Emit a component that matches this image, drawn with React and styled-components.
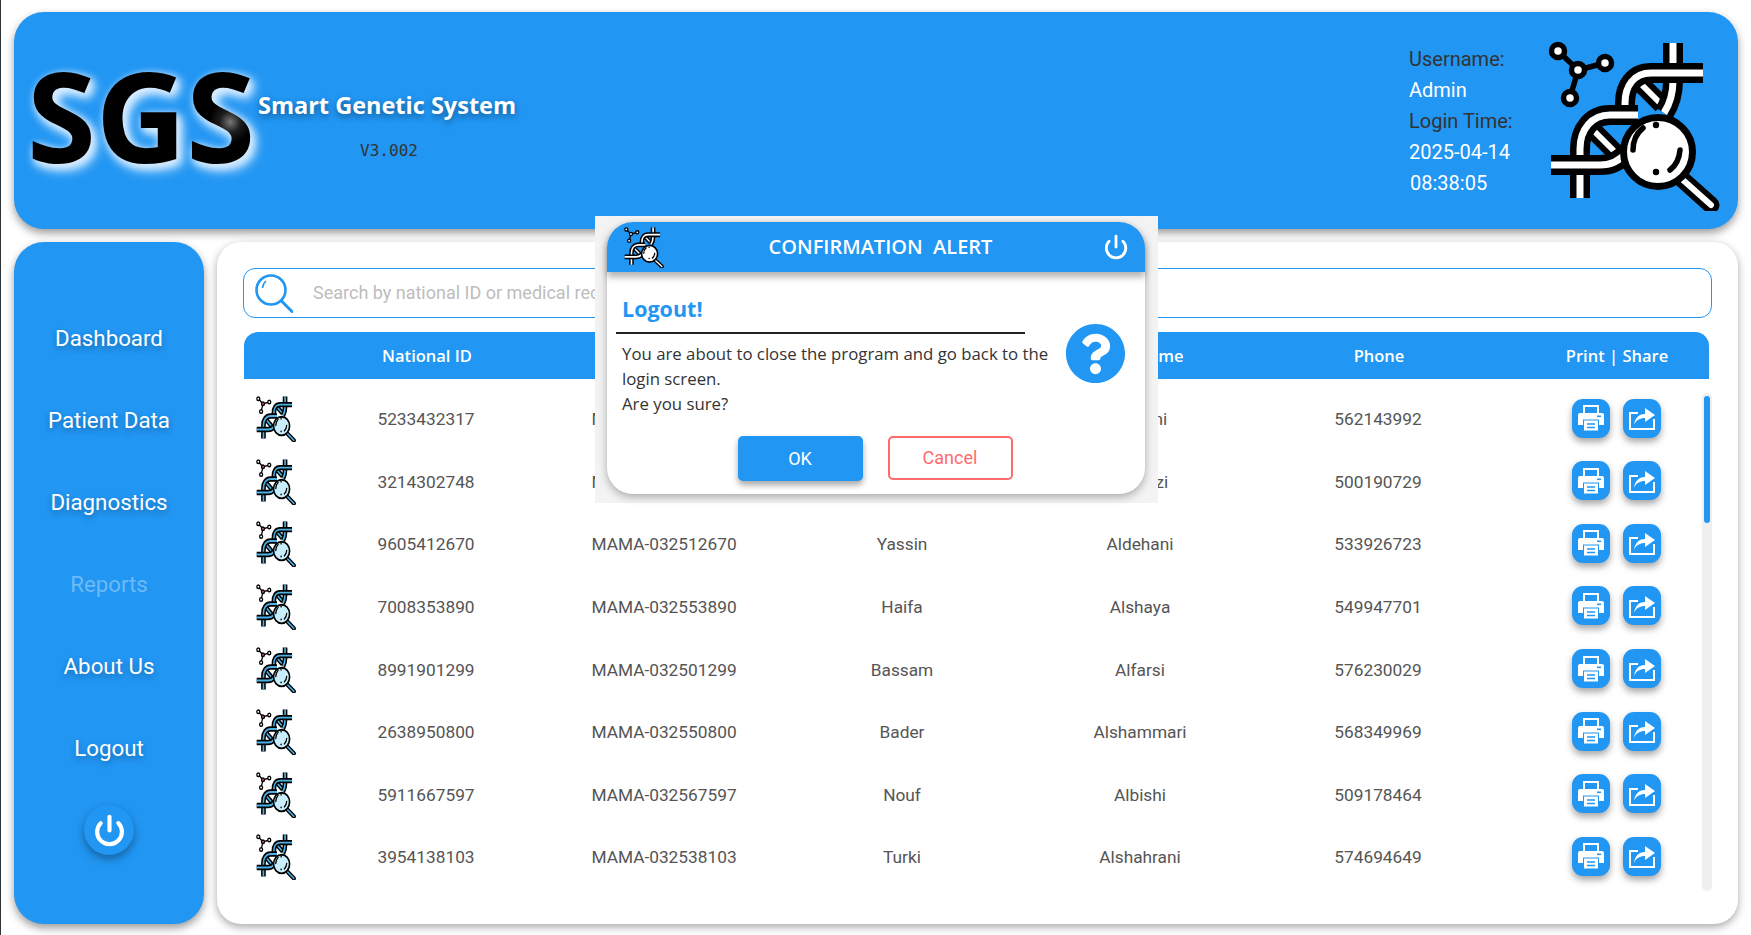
import React from 'react';
import styled, { createGlobalStyle, css } from 'styled-components';
import { Power } from 'lucide-react';
import { FaQuestionCircle } from 'react-icons/fa';

const BLUE = '#2196f3';

const patients = [
  ['5233432317', 'MAMA-032532317', 'Nasser', 'Alqarni', '562143992'],
  ['3214302748', 'MAMA-032502748', 'Noura', 'Alanazi', '500190729'],
  ['9605412670', 'MAMA-032512670', 'Yassin', 'Aldehani', '533926723'],
  ['7008353890', 'MAMA-032553890', 'Haifa', 'Alshaya', '549947701'],
  ['8991901299', 'MAMA-032501299', 'Bassam', 'Alfarsi', '576230029'],
  ['2638950800', 'MAMA-032550800', 'Bader', 'Alshammari', '568349969'],
  ['5911667597', 'MAMA-032567597', 'Nouf', 'Albishi', '509178464'],
  ['3954138103', 'MAMA-032538103', 'Turki', 'Alshahrani', '574694649'],
];

const navItems = ['Dashboard', 'Patient Data', 'Diagnostics', 'Reports', 'About Us', 'Logout'];

const tubes = [
  'M125,2 V40 Q125,58 116,72',
  'M155,32 H103 C86,32 77,45 77,62 V74',
  'M32,157 V108 C32,88 44,74 62,74 H90',
  'M3,124 H52 Q68,124 78,112',
];

const GeneIcon = ({ width, height, tube = '#fff', lens = '#fff', node = '#fff' }) => (
  <svg width={width} height={height} viewBox="0 0 172 170" preserveAspectRatio="none">
    <g fill="none" stroke="#000" strokeWidth="5.5">
      <path d="M30,29 L10,10 M30,29 L57,22 M30,29 L22,57" />
      <circle cx="10" cy="10" r="6.5" fill="#fff" />
      <circle cx="57" cy="22" r="6.5" fill="#fff" />
      <circle cx="22" cy="57" r="6.5" fill="#fff" />
      <circle cx="30" cy="29" r="6.5" fill={node} />
    </g>
    <g fill="none">
      <path d="M90,40 L114,64 M44,88 L68,112" stroke="#000" strokeWidth="18" />
      <path d="M90,40 L114,64 M44,88 L68,112" stroke={tube} strokeWidth="6" />
      {tubes.map((d) => (
        <g key={d}>
          <path d={d} stroke="#000" strokeWidth="20" />
          <path d={d} stroke={tube} strokeWidth="7" />
        </g>
      ))}
    </g>
    <path d="M135,139 L163,164" stroke="#000" strokeWidth="17" strokeLinecap="round" />
    <path d="M135,139 L163,164" stroke={tube} strokeWidth="6" strokeLinecap="round" />
    <circle cx="110" cy="111" r="34.5" fill={lens} stroke="#000" strokeWidth="7" />
    <g fill="none" stroke="#000" strokeWidth="5.5" strokeLinecap="round">
      <path d="M95,87 Q85,95 85,109" />
      <path d="M132,109 Q131,122 122,129" />
    </g>
    <circle cx="108" cy="84" r="3.2" fill="#000" />
    <circle cx="108" cy="131" r="3.2" fill="#000" />
  </svg>
);

const SearchIcon = () => (
  <svg width="38" height="40" viewBox="0 0 38 40" fill="none" stroke={BLUE} strokeWidth="2.6">
    <circle cx="16" cy="17" r="14.5" />
    <path d="M26.5,28 L37,38.5" strokeLinecap="round" strokeWidth="3" />
    <path d="M7.5,15 Q8,10.5 11,8" strokeWidth="1.6" />
  </svg>
);

const PrintIcon = () => (
  <svg width="30" height="30" viewBox="0 0 30 30">
    <rect x="8" y="3" width="14" height="8" fill="none" stroke="#fff" strokeWidth="2" />
    <path d="M4,10 H26 Q28,10 28,12 V22 H2 V12 Q2,10 4,10 Z" fill="#fff" />
    <rect x="21" y="12.5" width="4" height="1.6" fill={BLUE} />
    <rect x="7.5" y="17" width="15" height="11" fill="#fff" stroke={BLUE} strokeWidth="1" />
    <path d="M11,21 H19 M11,24.5 H19" stroke={BLUE} strokeWidth="1.6" />
  </svg>
);

const ShareIcon = () => (
  <svg width="30" height="30" viewBox="0 0 30 30">
    <path d="M11,10 H3 V26 H27 V16" fill="none" stroke="#fff" strokeWidth="2" />
    <path d="M7,22 C8,14 13,11 18,11 V5 L28,12 L18,19 V15 C13,15 9,17 7,22 Z" fill="#fff" />
  </svg>
);

const App = () => (
  <Page>
    <GlobalStyle />
    <Header>
      <Logo>SGS</Logo>
      <Brand>
        <BrandName>Smart Genetic System</BrandName>
        <Version>V3.002</Version>
      </Brand>
      <UserInfo>
        <UserLabel>Username:</UserLabel>
        <UserValue>Admin</UserValue>
        <UserLabel>Login Time:</UserLabel>
        <UserValue>2025-04-14</UserValue>
        <UserValue $nudge>08:38:05</UserValue>
      </UserInfo>
      <HeaderIcon>
        <GeneIcon width={172} height={170} />
      </HeaderIcon>
    </Header>
    <Main>
      <Sidebar>
        {navItems.map((item) => (
          <NavItem key={item} $disabled={item === 'Reports'}>
            {item}
          </NavItem>
        ))}
        <PowerButton>
          <Power size={33} strokeWidth={3} color="#fff" />
        </PowerButton>
      </Sidebar>
      <Content>
        <SearchBar>
          <SearchIcon />
          <SearchInput placeholder="Search by national ID or medical record number" />
        </SearchBar>
        <TableHead>
          <span />
          <HeadCell>National ID</HeadCell>
          <HeadCell>Medical Record</HeadCell>
          <HeadCell>First Name</HeadCell>
          <HeadCell>Last Name</HeadCell>
          <HeadCell>Phone</HeadCell>
          <HeadCell $last>Print | Share</HeadCell>
        </TableHead>
        <TableBody>
          <Rows>
            {patients.map((p) => (
              <Row key={p[0]}>
                <GeneIcon width={40} height={46} tube="#4db2e6" lens="#c8edfb" node="#e8605c" />
                {p.map((value) => (
                  <Cell key={value}>{value}</Cell>
                ))}
                <Actions>
                  <ActionButton>
                    <PrintIcon />
                  </ActionButton>
                  <ActionButton>
                    <ShareIcon />
                  </ActionButton>
                </Actions>
              </Row>
            ))}
          </Rows>
          <ScrollTrack>
            <ScrollThumb />
          </ScrollTrack>
        </TableBody>
      </Content>
    </Main>
    <ModalBackdrop>
      <Modal>
        <ModalHeader>
          <GeneIcon width={40} height={41} />
          <ModalTitle>CONFIRMATION&nbsp;&nbsp;ALERT</ModalTitle>
          <Power size={26} strokeWidth={2.6} color="#fff" />
        </ModalHeader>
        <ModalBody>
          <ModalMessage>
            <ModalHeading>Logout!</ModalHeading>
            <Divider />
            <MessageText>
              You are about to close the program and go back to the login screen.
              <br />
              Are you sure?
            </MessageText>
          </ModalMessage>
          <QuestionMark>
            <FaQuestionCircle size={61} color={BLUE} />
          </QuestionMark>
        </ModalBody>
        <ModalActions>
          <OkButton>OK</OkButton>
          <CancelButton>Cancel</CancelButton>
        </ModalActions>
      </Modal>
    </ModalBackdrop>
  </Page>
);

const GlobalStyle = createGlobalStyle`
  html, body {
    margin: 0;
    padding: 0;
    background: #fff;
    overflow: hidden;
  }
  * {
    box-sizing: border-box;
  }
`;

const Page = styled.div`
  position: relative;
  width: 1751px;
  height: 935px;
  padding: 12px 13px 0 13px;
  border-left: 1px solid #2f3336;
  font-family: Roboto, sans-serif;
  overflow: hidden;
`;

const Header = styled.header`
  height: 217px;
  display: flex;
  align-items: center;
  padding: 0 18px 0 13px;
  background: ${BLUE};
  border-radius: 30px;
  box-shadow: 0 4px 8px rgba(0, 0, 0, 0.4);
`;

const Logo = styled.div`
  width: 231px;
  margin-top: -12px;
  font-family: 'Open Sans', sans-serif;
  font-weight: 700;
  font-size: 125px;
  line-height: 1;
  color: transparent;
  background-image: radial-gradient(circle at 88% 56%, #777, #1c1c1c 5%, #000 10%);
  -webkit-background-clip: text;
  background-clip: text;
  filter: drop-shadow(3px 3px 4px #d8edff) drop-shadow(2px 3px 4px #cfe8ff);
`;

const Brand = styled.div`
  display: flex;
  flex-direction: column;
  align-items: center;
  width: 258px;
  margin-top: 7px;
`;

const BrandName = styled.div`
  font-family: 'Open Sans', sans-serif;
  font-weight: 700;
  font-size: 23.5px;
  line-height: 32px;
  color: #fff;
  white-space: nowrap;
  text-shadow: 0 3px 6px rgba(0, 0, 0, 0.4);
`;

const Version = styled.div`
  margin-top: 21px;
  margin-left: 4px;
  font-family: 'DejaVu Sans Mono', monospace;
  font-size: 16px;
  line-height: 18px;
  color: #333;
`;

const UserInfo = styled.div`
  margin-left: auto;
  margin-right: 34px;
  margin-top: 2px;
  width: 105px;
  display: flex;
  flex-direction: column;
  font-size: 20px;
  line-height: 31px;
  white-space: nowrap;
`;

const UserLabel = styled.div`
  color: #333;
`;

const UserValue = styled.div`
  color: #fff;
  ${(p) => p.$nudge && 'padding-left: 1px;'}
`;

const HeaderIcon = styled.div`
  margin-top: 11px;
  line-height: 0;
`;

const Main = styled.main`
  display: flex;
  gap: 13px;
  height: 682px;
  margin-top: 13px;
`;

const Sidebar = styled.nav`
  flex: 0 0 190px;
  display: flex;
  flex-direction: column;
  align-items: center;
  padding-top: 55px;
  background: ${BLUE};
  border-radius: 30px;
  box-shadow: 0 4px 8px rgba(0, 0, 0, 0.4);
`;

const NavItem = styled.div`
  height: 82px;
  display: flex;
  align-items: center;
  font-size: 22.3px;
  color: ${(p) => (p.$disabled ? 'rgba(255, 255, 255, 0.35)' : '#fff')};
  text-shadow: ${(p) => (p.$disabled ? 'none' : '0 3px 6px rgba(0, 0, 0, 0.3)')};
`;

const PowerButton = styled.div`
  width: 50px;
  height: 50px;
  margin-top: 16px;
  display: flex;
  align-items: center;
  justify-content: center;
  background: ${BLUE};
  border-radius: 50%;
  box-shadow: 0 4px 8px rgba(0, 0, 0, 0.35);
`;

const Content = styled.section`
  flex: 1;
  min-width: 0;
  display: flex;
  flex-direction: column;
  padding: 26px 26px 0;
  background: #fff;
  border-radius: 24px;
  box-shadow: 0 3px 8px rgba(0, 0, 0, 0.35);
`;

const SearchBar = styled.div`
  height: 50px;
  display: flex;
  align-items: center;
  gap: 18px;
  padding: 0 11px;
  border: 1.5px solid ${BLUE};
  border-radius: 12px;
`;

const SearchInput = styled.input`
  flex: 1;
  border: none;
  outline: none;
  background: transparent;
  font-family: Roboto, sans-serif;
  font-size: 18px;
  color: #555;
  margin-top: -1px;
  &::placeholder {
    color: #bdbdbd;
  }
`;

const columns = css`
  display: grid;
  grid-template-columns: 64px repeat(5, 238px) minmax(0, 1fr);
  align-items: center;
`;

const TableHead = styled.div`
  ${columns}
  height: 47px;
  margin: 14px 3px 0 1px;
  background: ${BLUE};
  border-radius: 14px 14px 0 0;
`;

const HeadCell = styled.div`
  text-align: center;
  font-family: 'Open Sans', sans-serif;
  font-size: 16.5px;
  font-weight: 600;
  color: #fff;
  white-space: nowrap;
  ${(p) => p.$last && 'width: 238px;'}
`;

const TableBody = styled.div`
  flex: 1;
  display: flex;
  margin-top: 9px;
  margin-left: 1px;
`;

const Rows = styled.div`
  width: 1458px;
  display: flex;
  flex-direction: column;
`;

const Row = styled.div`
  ${columns}
  height: 62.57px;
  padding-left: 12px;
  grid-template-columns: 51px repeat(5, 238px) minmax(0, 1fr);
`;

const Cell = styled.div`
  text-align: center;
  font-size: 17.3px;
  color: #555;
`;

const Actions = styled.div`
  width: 238px;
  margin-top: -2px;
  display: flex;
  justify-content: center;
  gap: 13px;
`;

const ActionButton = styled.div`
  width: 38px;
  height: 39px;
  display: flex;
  align-items: center;
  justify-content: center;
  background: ${BLUE};
  border-radius: 11px;
  box-shadow: 0 4px 7px rgba(0, 0, 0, 0.35);
`;

const ScrollTrack = styled.div`
  width: 10px;
  height: 498px;
  margin-top: 5px;
  padding: 3px 2px;
  background: #efefef;
  border-radius: 5px;
`;

const ScrollThumb = styled.div`
  height: 127px;
  background: ${BLUE};
  border-radius: 3px;
`;

const ModalBackdrop = styled.div`
  position: absolute;
  left: 594px;
  top: 216px;
  width: 563px;
  height: 287px;
  padding: 6px 13px 0 12px;
  background: #f3f3f3;
`;

const Modal = styled.div`
  height: 272px;
  background: #fff;
  border-radius: 26px;
  box-shadow: 0 3px 8px rgba(0, 0, 0, 0.3);
`;

const ModalHeader = styled.div`
  height: 50px;
  display: flex;
  align-items: center;
  padding: 0 16px 0 17px;
  background: ${BLUE};
  border-radius: 26px 26px 0 0;
  box-shadow: 0 5px 7px rgba(0, 0, 0, 0.3);
`;

const ModalTitle = styled.div`
  flex: 1;
  text-align: center;
  margin-right: 6px;
  margin-top: -1px;
  font-family: 'Open Sans', sans-serif;
  font-weight: 600;
  font-size: 20px;
  color: #fff;
`;

const ModalBody = styled.div`
  display: flex;
  padding: 14px 0 0 9px;
`;

const ModalMessage = styled.div`
  width: 440px;
`;

const ModalHeading = styled.div`
  padding-left: 6px;
  height: 45px;
  display: flex;
  align-items: center;
  font-family: 'Open Sans', sans-serif;
  font-weight: 700;
  font-size: 21.5px;
  color: ${BLUE};
`;

const Divider = styled.div`
  width: 409px;
  height: 1.5px;
  margin-top: 1px;
  background: #222;
`;

const MessageText = styled.div`
  margin-top: 7px;
  padding-left: 6px;
  font-family: 'Open Sans', sans-serif;
  font-size: 16.8px;
  line-height: 25px;
  color: #333;
`;

const QuestionMark = styled.div`
  margin: 37px 0 0 9px;
  line-height: 0;
`;

const ModalActions = styled.div`
  display: flex;
  justify-content: center;
  gap: 25px;
  margin-top: 20px;
  padding-right: 2px;
`;

const buttonBase = css`
  width: 125px;
  height: 45px;
  display: flex;
  align-items: center;
  justify-content: center;
  border-radius: 5px;
  font-size: 18px;
`;

const OkButton = styled.div`
  ${buttonBase}
  background: ${BLUE};
  color: #fff;
  box-shadow: 0 4px 6px rgba(0, 0, 0, 0.35);
`;

const CancelButton = styled.div`
  ${buttonBase}
  height: 44px;
  background: #fff;
  border: 2px solid #ff6b6b;
  color: #ff6b6b;
`;

export default App;
